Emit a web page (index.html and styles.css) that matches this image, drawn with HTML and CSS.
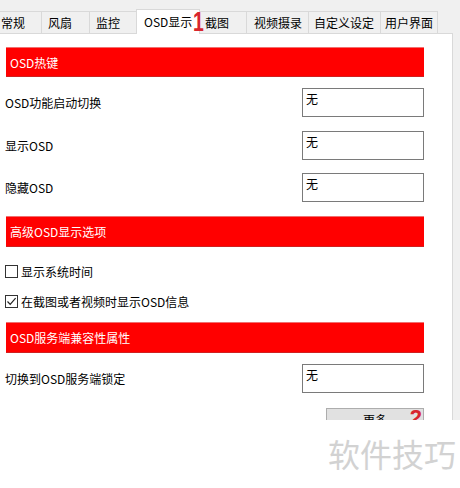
FILE: index.html
```html
<!DOCTYPE html>
<html lang="zh-CN">
<head>
<meta charset="utf-8">
<title>OSD显示</title>
<link rel="stylesheet" href="styles.css">
</head>
<body>
<div class="window">
  <div class="tabs">
    <div class="tab w-general">常规</div>
    <div class="tab w-fan">风扇</div>
    <div class="tab w-monitor">监控</div>
    <div class="tab active">OSD显示<span class="mark mark-1">1</span></div>
    <div class="tab w-shot">截图</div>
    <div class="tab w-video">视频摄录</div>
    <div class="tab w-custom">自定义设定</div>
    <div class="tab w-ui">用户界面</div>
  </div>
  <div class="panel">
    <div class="bar bar-1">OSD热键</div>
    <div class="row r1"><span class="label">OSD功能启动切换</span><div class="field">无</div></div>
    <div class="row r2"><span class="label">显示OSD</span><div class="field">无</div></div>
    <div class="row r3"><span class="label">隐藏OSD</span><div class="field">无</div></div>
    <div class="bar bar-2">高级OSD显示选项</div>
    <label class="check c1"><span class="box"></span>显示系统时间</label>
    <label class="check c2"><span class="box checked"><svg width="11" height="11" viewBox="0 0 11 11"><path d="M1.5 5.5 L4.2 8.3 L9.6 2.2" fill="none" stroke="#222" stroke-width="1.2"/></svg></span>在截图或者视频时显示OSD信息</label>
    <div class="bar bar-3">OSD服务端兼容性属性</div>
    <div class="row r4"><span class="label">切换到OSD服务端锁定</span><div class="field">无</div></div>
    <div class="actions"><div class="btn">更多<span class="mark mark-2">2</span></div></div>
  </div>
</div>
<div class="footer"><span class="watermark">软件技巧</span></div>
</body>
</html>
```

FILE: styles.css
```css
html, body {
  margin: 0;
  padding: 0;
}
body {
  width: 460px;
  height: 488px;
  background: #ffffff;
  font-family: "Noto Sans CJK SC", "Microsoft YaHei", "Noto Sans", sans-serif;
  font-size: 12px;
  color: #000;
  overflow: hidden;
}
.window {
  height: 420px;
  overflow: hidden;
  background: #f0f0f0;
  display: flex;
  flex-direction: column;
}
.tabs {
  flex: none;
  display: flex;
  align-items: flex-end;
  height: 33px;
  margin-left: -6px;
  position: relative;
  z-index: 2;
}
.tab {
  flex: none;
  height: 22px;
  line-height: 21px;
  padding: 0 0 0 6px;
  box-sizing: border-box;
  border-top: 1px solid #d9d9d9;
  border-left: 1px solid #d9d9d9;
  background: #f0f0f0;
  white-space: nowrap;
  color: #000;
}
.w-general { width: 47px; }
.w-fan { width: 48px; }
.w-monitor { width: 49px; }
.w-shot { width: 48px; }
.w-video { width: 62px; padding-left: 7px; }
.w-custom { width: 72px; padding-left: 5px; }
.w-ui { width: 58px; padding-left: 4px; border-right: 1px solid #d9d9d9; }
.tab.active {
  position: relative;
  width: 64px;
  height: 25px;
  line-height: 24px;
  margin: 0 -2px -1px -2px;
  padding-left: 7px;
  background: #fff;
  border-right: 1px solid #d9d9d9;
  z-index: 1;
}
.mark {
  position: absolute;
  color: #d8262e;
  font-family: "Liberation Sans", sans-serif;
  font-weight: bold;
  line-height: 1;
}
.mark-1 {
  left: 56px;
  top: -1px;
  font-size: 27px;
  transform: scaleX(0.72);
  transform-origin: left top;
}
.mark-2 {
  right: 1px;
  top: -2px;
  font-size: 22px;
}
.panel {
  width: 453px;
  box-sizing: border-box;
  flex: none;
  height: 387px;
  background: #fff;
  border-top: 1px solid #d9d9d9;
  border-right: 1px solid #d9d9d9;
  padding: 13px 28px 0 6px;
  display: flex;
  flex-direction: column;
}
.panel > * {
  flex: none;
}
.bar {
  background: #ff0000;
  color: #fff;
  height: 30px;
  box-sizing: border-box;
  border-top: 1px solid #f07070;
  border-bottom: 1px solid #d02020;
  padding-left: 4px;
  display: flex;
  align-items: center;
}
.bar-2, .bar-3 {
  height: 31px;
  margin-top: 14px;
}
.bar-3 {
  margin-top: 12px;
}
.row {
  display: flex;
  justify-content: space-between;
  align-items: center;
  height: 29px;
  margin-left: -1px;
}
.r1 { margin-top: 11px; }
.r2 { margin-top: 14px; }
.r3 { margin-top: 13px; }
.r4 { margin-top: 11px; }
.field {
  width: 122px;
  height: 29px;
  box-sizing: border-box;
  border: 1px solid #7a7a7a;
  padding: 2px 3px;
  line-height: 16px;
  background: #fff;
}
.check {
  display: flex;
  align-items: center;
  height: 18px;
  margin-left: -1px;
  gap: 3px;
}
.c1 { margin-top: 15px; }
.c2 { margin-top: 12px; }
.box {
  width: 13px;
  height: 13px;
  box-sizing: border-box;
  border: 1px solid #333;
  background: #fff;
  display: flex;
  align-items: center;
  justify-content: center;
}
.actions {
  display: flex;
  justify-content: flex-end;
  margin-top: 15px;
}
.btn {
  position: relative;
  width: 98px;
  height: 23px;
  box-sizing: border-box;
  background: #e1e1e1;
  border: 1px solid #adadad;
  text-align: center;
  line-height: 21px;
}
.footer {
  height: 68px;
  background: #fff;
  display: flex;
  justify-content: flex-end;
  align-items: flex-start;
  padding-right: 4px;
}
.watermark {
  margin-top: 13px;
  font-size: 32px;
  line-height: 40px;
  color: #d2d2d2;
}
```
